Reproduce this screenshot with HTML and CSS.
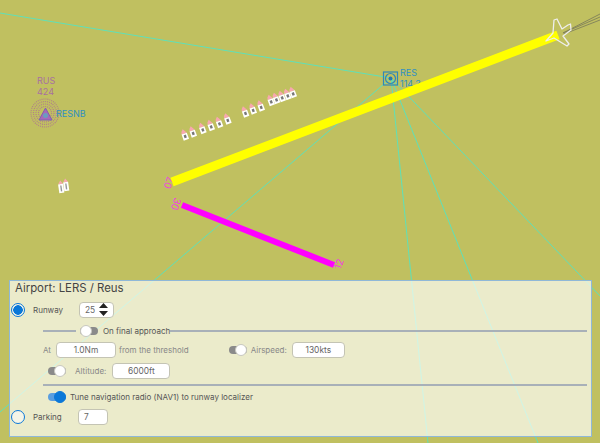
FILE: index.html
```html
<!DOCTYPE html>
<html lang="en">
<head>
<meta charset="utf-8">
<title>Airport: LERS / Reus</title>
<link rel="stylesheet" href="styles.css">
</head>
<body>
<main class="map">
  <svg class="chart" width="600" height="443" viewBox="0 0 600 443" xmlns="http://www.w3.org/2000/svg">
    <defs>
      <g id="bldg"><path d="M-2.800 -1.500 L-2 -4 L0 -6 L2.800 -1.500 Z" fill="#f8a8b0"/><rect x="-2.800" y="-1.500" width="5.600" height="6.500" fill="#fff"/><rect x="-1.200" y="0" width="2.400" height="3" fill="#777"/></g>
      <g id="tall"><path d="M-2.500 -3 L0 -6.500 L2.500 -3 Z" fill="#f8a8b0"/><rect x="-2.500" y="-3" width="5" height="9" fill="#fff"/><rect x="-.700" y="-1.500" width="1.400" height="6" fill="#999"/></g>
    </defs>
    <g class="radial">
      <path d="M0 13 L391 78"/>
      <path d="M391 78 L0 412"/>
      <path d="M391 78 L428 443"/>
      <path d="M391 78 L538 443"/>
      <path d="M391 78 L600 296"/>
    </g>
    <path class="rwy-magenta" d="M182 205 L334 265"/>
    <text class="rwy-label" transform="translate(169 183) rotate(-70)" text-anchor="middle" y="3.500">07</text>
    <text class="rwy-label" transform="translate(176 204) rotate(110)" text-anchor="middle" y="3.500">30</text>
    <text class="rwy-label" transform="translate(339 264) rotate(-70)" text-anchor="middle" y="3.500">12</text>

    <g class="ndb">
      <circle cx="45" cy="113" r="14"/><circle cx="45" cy="113" r="11.500"/><circle cx="45" cy="113" r="9"/><circle cx="45" cy="113" r="6.500"/>
    </g>
    <path class="ndb-tri" d="M45.500 108 L52 120 L39 120 Z"/>
    <circle class="ndb-dot" cx="45.500" cy="115.500" r="2.500"/>
    <text class="lbl-ndb" x="37" y="84">RUS</text>
    <text class="lbl-ndb" x="37" y="95">424</text>
    <text class="lbl-blue" x="56" y="117">RESNB</text>

    <g class="vor">
      <rect x="383.500" y="72" width="14" height="13"/>
      <circle cx="390.500" cy="78.500" r="5"/>
    </g>
    <circle class="vor-dot" cx="390.500" cy="78.500" r="2"/>
    <text class="lbl-blue" x="400" y="76">RES</text>
    <text class="lbl-blue" x="400" y="87">114.3</text>
    <path class="rwy-yellow" d="M172 182 L558 35"/>

    <use href="#bldg" transform="translate(184.700 135) rotate(-20)"/>
    <use href="#bldg" transform="translate(192.700 132) rotate(-20)"/>
    <use href="#bldg" transform="translate(202.300 128.500) rotate(-20)"/>
    <use href="#bldg" transform="translate(210.700 125.500) rotate(-20)"/>
    <use href="#bldg" transform="translate(219 122.500) rotate(-20)"/>
    <use href="#bldg" transform="translate(227.300 119) rotate(-20)"/>
    <use href="#bldg" transform="translate(245 112) rotate(-20)"/>
    <use href="#bldg" transform="translate(252.700 109) rotate(-20)"/>
    <use href="#bldg" transform="translate(260.700 106) rotate(-20)"/>
    <use href="#bldg" transform="translate(270.700 100.500) rotate(-20)"/>
    <use href="#bldg" transform="translate(276 98.500) rotate(-20)"/>
    <use href="#bldg" transform="translate(281.700 96.500) rotate(-20)"/>
    <use href="#bldg" transform="translate(287.300 94.500) rotate(-20)"/>
    <use href="#bldg" transform="translate(292.700 92.500) rotate(-20)"/>
    <use href="#tall" transform="translate(61 187) rotate(-8)"/>
    <use href="#tall" transform="translate(66 185) rotate(-8)"/>

    <path class="trail" d="M563 33 L600 14 M563 33 L600 17 M564 34 L600 20"/>
    <path class="plane" d="M546 41 L553 33 L554 20 L557 19 L562 29 L568 25 L570.500 24 L571 30 L563 36 L569 44 L567 46 L554 38 Z"/>
  </svg>

  <section class="panel">
    <h1 class="title">Airport: LERS / Reus</h1>
    <div class="row row-main row-runway">
      <span class="radio radio-on"></span>
      <span class="name">Runway</span>
      <span class="field field-select">25
        <svg class="spin" width="9" height="13" viewBox="0 0 9 13"><path d="M4.500 0 L9 5 L0 5 Z M4.500 13 L9 8 L0 8 Z" fill="#222"/></svg>
      </span>
    </div>
    <div class="legend">
      <span class="rule rule-short"></span>
      <span class="toggle toggle-off"><i class="knob"></i></span>
      <span class="legend-text">On final approach</span>
      <span class="rule"></span>
    </div>
    <div class="row row-at">
      <span class="muted">At</span>
      <span class="field field-dist">1.0Nm</span>
      <span class="muted">from the threshold</span>
      <span class="toggle toggle-grey toggle-speed"><i class="knob"></i></span>
      <span class="muted">Airspeed:</span>
      <span class="field field-speed">130kts</span>
    </div>
    <div class="row row-alt">
      <span class="toggle toggle-grey"><i class="knob"></i></span>
      <span class="muted alt-label">Altitude:</span>
      <span class="field field-alt">6000ft</span>
    </div>
    <div class="rule rule-full"></div>
    <div class="row row-tune">
      <span class="toggle toggle-blue"><i class="knob"></i></span>
      <span class="name">Tune navigation radio (NAV1) to runway localizer</span>
    </div>
    <div class="row row-main row-parking">
      <span class="radio"></span>
      <span class="name">Parking</span>
      <span class="field field-park">7</span>
    </div>
  </section>
</main>
</body>
</html>
```

FILE: styles.css
```css
* { box-sizing: border-box; }
html, body { margin: 0; padding: 0; }
body { width: 600px; height: 443px; overflow: hidden; background: #c0c060; font-family: Inter, "Liberation Sans", sans-serif; }
.map { position: relative; width: 600px; height: 443px; overflow: hidden; }
.chart { position: absolute; left: 0; top: 0; }
.radial path { fill: none; stroke: #5fe0b8; stroke-width: 1; }
.rwy-yellow { fill: none; stroke: #ffff00; stroke-width: 9; }
.rwy-magenta { fill: none; stroke: #ff00ff; stroke-width: 6; }
.rwy-label { font-size: 10px; fill: #f040e0; }
.ndb circle { fill: none; stroke: #b08088; stroke-width: 1.200; stroke-dasharray: 1 1; }
.ndb-tri { fill: #a868b8; stroke: #8060b0; stroke-width: 1; }
.ndb-dot { fill: #6a9cc0; }
.lbl-ndb { font-size: 9px; fill: #a870a0; }
.lbl-blue { font-size: 9px; fill: #3090c0; }
.vor rect, .vor circle { fill: none; stroke: #3088b8; stroke-width: 1.200; }
.vor-dot { fill: #2878b0; }
.plane { fill: none; stroke: #eeeeee; stroke-width: 1.300; stroke-linejoin: round; }
.trail { fill: none; stroke: #77775a; stroke-width: .8; }

.panel { position: absolute; left: 9px; top: 280px; width: 583px; height: 157px; padding: 0 5px; background: rgba(253, 253, 250, .7); border: 1px solid #8fb8d8; display: flex; flex-direction: column; color: #555; font-size: 8px; }
.title { margin: 0; height: 14px; font-size: 11.400px; line-height: 14px; font-weight: 400; color: #444; }
.row { display: flex; align-items: center; }
.row-main { height: 19px; }
.row-runway { margin-top: 5px; }
.radio { width: 14px; height: 14px; margin-left: -4px; border: 1.500px solid #0b78d8; border-radius: 50%; background: #f5f5e8; flex: none; }
.radio-on { background: radial-gradient(circle, #0b78d8 0 4.500px, #f5f5e8 5px); }
.row-main .name { width: 46px; margin-left: 8px; }
.row-tune .name { margin-left: 4px; }
.field { display: inline-flex; align-items: center; justify-content: center; height: 16px; background: #fff; border: 1px solid #c4c4b4; border-radius: 4px; color: #666; font-size: 8.400px; }
.field-select { width: 35px; justify-content: space-between; padding: 0 5px; }
.spin { flex: none; }
.legend { display: flex; align-items: center; height: 18px; margin-top: 3px; margin-left: 28px; width: 544px; }
.rule { flex: 1; height: 1.500px; background: #a8b0b8; }
.rule-short { flex: none; width: 33px; margin-right: 4px; }
.legend-text { margin-left: 5px; }
.toggle { position: relative; display: inline-block; width: 18px; height: 8px; border-radius: 4px; background: #8a8a8a; flex: none; }
.knob { position: absolute; top: -2px; width: 12px; height: 12px; border-radius: 50%; background: #fff; border: 1px solid #c8c8c0; }
.toggle-off .knob { left: 0; }
.toggle-grey .knob { right: 0; }
.toggle-blue { background: #5a9ee0; }
.toggle-blue .knob { right: 0; background: #0b78d8; border-color: #0b78d8; }
.muted { color: #888; }
.row-at { height: 16px; margin-top: 2px; margin-left: 28px; }
.field-dist { width: 60px; margin: 0 3px 0 5px; }
.toggle-speed { margin-left: 40px; margin-right: 4px; }
.field-speed { width: 53px; margin-left: 5px; }
.row-alt { height: 16px; margin-top: 5px; margin-left: 33px; }
.alt-label { margin-left: 9px; }
.field-alt { width: 58px; margin-left: 6px; }
.rule-full { flex: none; width: 544px; margin: 5px 0 0 28px; }
.row-tune { height: 16px; margin-top: 3px; margin-left: 33px; }
.row-parking { margin-top: 3px; }
.field-park { width: 30px; justify-content: flex-start; padding-left: 5px; margin-left: -1px; }
```
